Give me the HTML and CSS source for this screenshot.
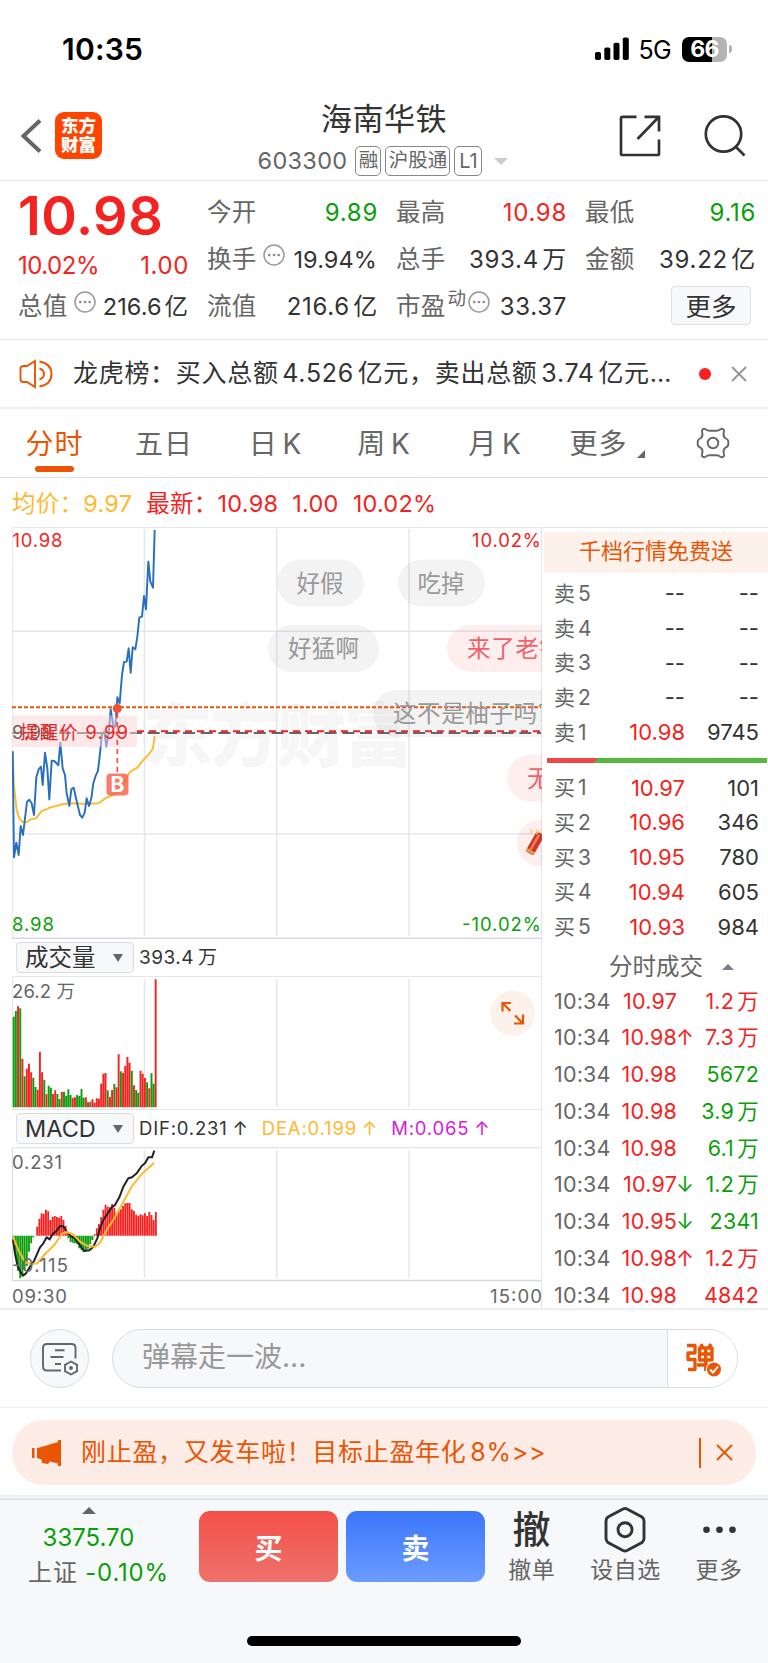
FILE: index.html
```
<!DOCTYPE html>
<html lang="zh-CN">
<head>
<meta charset="utf-8">
<title>海南华铁 603300</title>
<link rel="stylesheet" href="styles.css">
</head>
<body>
<svg class="defs" width="0" height="0">
  <symbol id="info" viewBox="0 0 24 24"><circle cx="12" cy="12" r="10" fill="none" stroke="#999" stroke-width="1.500"/><g fill="#888"><circle cx="7.300" cy="12" r="1.300"/><circle cx="12" cy="12" r="1.300"/><circle cx="16.700" cy="12" r="1.300"/></g></symbol>
</svg>

<div class="status">
  <span class="clock">10:35</span>
  <span class="status-right">
    <svg width="34" height="24" viewBox="0 0 34 24"><rect x="0" y="15" width="6" height="8" rx="1.800"/><rect x="9.300" y="10.500" width="6" height="12.500" rx="1.800"/><rect x="18.500" y="5.700" width="6" height="17.300" rx="1.800"/><rect x="27.800" y="0.500" width="6" height="22.500" rx="1.800"/></svg>
    <span class="net">5G</span>
    <span class="battery"><span>66</span></span><i class="nub"></i>
  </span>
</div>

<header class="head">
  <div class="head-left">
    <svg width="22" height="36" viewBox="0 0 22 36" fill="none" stroke="#666" stroke-width="4"><path d="M20 2.500 3.500 18 20 33.500"/></svg>
    <div class="logo"><span>东方</span><span>财富</span></div>
  </div>
  <div class="title">
    <h1>海南华铁</h1>
    <div class="sub"><span class="code">603300</span><b>融</b><b class="mid">沪股通</b><b class="l1">L1</b><i class="tri-down"></i></div>
  </div>
  <div class="head-right">
    <svg width="42" height="42" viewBox="0 0 42 42" fill="none" stroke="#333" stroke-width="2.700"><path d="M17.500 1.800H3.500a1.500 1.500 0 0 0-1.500 1.500V38.500a1.500 1.500 0 0 0 1.500 1.500H38.500a1.500 1.500 0 0 0 1.500-1.500V24.500M25.500 1.800H40V16.500M40 1.800 18.500 24"/></svg>
    <svg width="42" height="42" viewBox="0 0 42 42" fill="none" stroke="#333" stroke-width="2.700"><circle cx="19.500" cy="19" r="17.700"/><path d="M31.500 31.500 40.500 40.500"/></svg>
  </div>
</header>

<section class="quote">
  <div class="col first">
    <div class="price red">10.98</div>
    <div class="row chg red"><span>10.02%</span><span class="abs">1.00</span></div>
    <div class="row"><span class="k">总值<svg class="ic"><use href="#info"/></svg></span><span class="v tight">216.6 亿</span></div>
  </div>
  <div class="col">
    <div class="row"><span class="k">今开</span><span class="v green">9.89</span></div>
    <div class="row"><span class="k">换手<svg class="ic"><use href="#info"/></svg></span><span class="v tight">19.94%</span></div>
    <div class="row"><span class="k">流值</span><span class="v">216.6 亿</span></div>
  </div>
  <div class="col">
    <div class="row"><span class="k">最高</span><span class="v red">10.98</span></div>
    <div class="row"><span class="k">总手</span><span class="v">393.4 万</span></div>
    <div class="row"><span class="k">市盈<sup>动</sup><svg class="ic near"><use href="#info"/></svg></span><span class="v">33.37</span></div>
  </div>
  <div class="col">
    <div class="row"><span class="k">最低</span><span class="v green">9.16</span></div>
    <div class="row"><span class="k">金额</span><span class="v">39.22 亿</span></div>
    <div class="row end"><button class="more">更多</button></div>
  </div>
</section>

<section class="news">
  <svg width="34" height="30" viewBox="0 0 34 30" fill="none" stroke="#ea5504" stroke-width="1.900"><path d="M16 2 8 7H4.500Q1.500 7 1.500 10V20Q1.500 23 4.500 23H8L16 28Z"/><path d="M20.500 9.500Q25 11 25 15T20.500 20.500M20.500 2.500C29 4 32.500 9 32.500 15S29 26 20.500 27.500"/></svg>
  <span class="news-text">龙虎榜：买入总额 4.526 亿元，卖出总额 3.74 亿元…</span>
  <i class="dot"></i>
  <svg width="16" height="16" viewBox="0 0 16 16" stroke="#999" stroke-width="2"><path d="M1 1 15 15M15 1 1 15"/></svg>
</section>

<nav class="tabs">
  <span class="on">分时</span><span>五日</span><span>日 K</span><span>周 K</span><span>月 K</span><span class="tmore">更多<i></i></span>
  <svg width="34" height="34" viewBox="-17 -17 34 34" fill="none" stroke="#666" stroke-width="1.900" stroke-linejoin="round"><path d="M-10.500 -13.500Q-9 -14.800 -7.500 -13.800Q-5.500 -12.300 -3.500 -12.300H3.500Q5.500 -12.300 7.500 -13.800Q9 -14.800 10.500 -13.500Q11.500 -12.500 10.800 -10.500Q9.800 -7 12 -5Q15.300 -3.500 15.300 -1.500V1.500Q15.300 3.500 12 5Q9.800 7 10.800 10.500Q11.500 12.500 10.500 13.500Q9 14.800 7.500 13.800Q5.500 12.300 3.500 12.300H-3.500Q-5.500 12.300 -7.500 13.800Q-9 14.800 -10.500 13.500Q-11.500 12.500 -10.800 10.500Q-9.800 7 -12 5Q-15.300 3.500 -15.300 1.500V-1.500Q-15.300 -3.500 -12 -5Q-9.800 -7 -10.800 -10.500Q-11.500 -12.500 -10.500 -13.500Z"/><circle r="5.300"/></svg>
</nav>

<div class="legend"><span class="yellow">均价：9.97</span><span class="red latest">最新：10.98</span><span class="red c2">1.00</span><span class="red c3">10.02%</span></div>

<main class="main">
  <div class="charts">
    <svg class="chart" width="530" height="412" viewBox="12 527 530 412">
      <g fill="#f6f6f6" font-weight="900" font-size="69"><text x="143" y="761" textLength="270">东方财富</text></g>
      <g stroke="#e3e7ed" fill="none"><path stroke-width="1.500" d="M144.500 529V936M276.800 529V936M409 529V936M12 631.300H541M12 834H541"/><path stroke="#e6e8ec" stroke-width="1.200" d="M12.500 939V527.500H541"/><path stroke="#d5d9df" stroke-width="1.500" d="M12 938.300H541"/></g>
      <g fill="none" stroke-width="5.800" stroke-linejoin="round" transform="translate(0 520) scale(.33333)">
        <path stroke="#ffb92e" d="M38 694 42 800 50 870 58 895 68 906 80 906 92 898 108 895 124 874 150 863 190 852 220 850 260 852 296 850 314 836 345 822 365 800 390 756 412 743 430 720 445 705 459 685 464 648"/>
        <path stroke="#296fc0" d="M38 694 42 1012 49 968 56 1005 62 918 69 945 81 845 88 839 95 850 102 885 109 772 116 748 123 740 128 795 135 698 142 745 148 838 155 722 163 723 175 736 181 668 188 745 195 765 200 820 208 858 214 808 221 803 228 835 240 885 247 893 254 878 260 835 267 858 274 835 280 790 286 770 294 752 300 700 306 640 313 635 319 680 326 640 332 568 340 620 346 620 352 532 359 550 366 465 372 426 380 425 386 385 392 458 398 382 406 388 412 350 418 292 426 290 432 228 438 268 445 125 451 185 459 203 464 30"/>
      </g>
      <path d="M12 707.300H541" stroke="#ea5504" stroke-width="2" stroke-dasharray="4 2"/>
      <path d="M12 733H541" stroke="#666" stroke-width="2" stroke-dasharray="12 5.700" stroke-dashoffset="6"/>
      <path d="M137 731.300H541" stroke="#f52222" stroke-width="2" stroke-dasharray="7 5"/>
      <g class="cap">
        <rect x="12" y="715.500" width="125" height="31.500" rx="3" fill="#fbd3d6" fill-opacity=".5"/>
        <text x="12" y="739" fill="#666" textLength="41">9.98</text>
        <text x="20" y="739" fill="#f52222" textLength="108">提醒价 9.99</text>
        <text x="12.500" y="547" fill="#f52222" textLength="50">10.98</text>
        <text x="472" y="547" fill="#f52222" textLength="69">10.02%</text>
        <text x="12" y="931" fill="#0a9f0a" textLength="42">8.98</text>
        <text x="462" y="931" fill="#0a9f0a" textLength="79">-10.02%</text>
      </g>
      <path d="M117.300 713V773" stroke="#f52222" stroke-opacity=".8" stroke-width="1.700" stroke-dasharray="5 4"/>
      <circle cx="117.300" cy="708.500" r="4.500" fill="#ee5233"/>
      <rect x="106.500" y="773.500" width="22" height="22" rx="4" fill="#f9644e" fill-opacity=".85"/>
      <text x="117.500" y="792" text-anchor="middle" font-size="21" font-weight="700" fill="#fff">B</text>
      <g fill="#888" fill-opacity=".1">
        <rect x="277" y="559.500" width="87" height="47" rx="23.500"/><rect x="398" y="559.500" width="87" height="47" rx="23.500"/><rect x="268" y="625" width="111" height="47" rx="23.500"/><rect x="373" y="690" width="220" height="47" rx="23.500"/>
        <g fill="#f52222" fill-opacity=".08"><rect x="447" y="625" width="130" height="47" rx="23.500"/><rect x="507" y="754.500" width="90" height="47" rx="23.500"/><rect x="517" y="819.500" width="80" height="47" rx="23.500"/></g>
      </g>
      <g font-size="23.500" fill="#999">
        <text x="296.500" y="592" textLength="47">好假</text><text x="417.500" y="592" textLength="47">吃掉</text><text x="288" y="657" textLength="71">好猛啊</text><text x="393" y="722" textLength="168">这不是柚子吗？</text>
        <g fill="#f0616a"><text x="467" y="657" textLength="96">来了老铁</text><text x="527" y="787">无敌</text></g>
      </g>
      <g transform="translate(541 838) rotate(30)"><rect x="-7" y="-4" width="9" height="23" rx="1.500" fill="#cf3525"/><rect x="-4.500" y="-2" width="2.500" height="18" fill="#f0785b"/><rect x="-7" y="15.500" width="9" height="3" fill="#d9a441"/></g>
      <path d="m530 829 3 3m-3 2 3-3m3-2 3 4m-3 1 4-4" stroke="#f5cf8a" stroke-width="1.200"/>
    </svg>

    <div class="ind"><span class="pick">成交量<i></i></span><span class="iv">393.4 万</span></div>
    <svg class="chart" width="530" height="134" viewBox="12 976 530 134">
      <path d="M144.500 979V1107M276.800 979V1107M409 979V1107" stroke="#e3e7ed" stroke-width="1.500"/><path d="M541 976.500H12.500V1107M12 1109.500H541" fill="none" stroke="#e3e6ea"/>
      <g fill="none" stroke-width="5.800" transform="translate(0 930) scale(.33333)">
        <path stroke="#0a9f0a" d="M41 532V260M47.600 532V243M60.700 532V235M73.800 532V439M100 532V443M106.600 532V471M132.900 532V449M146 532V467M152.600 532V473M172.200 532V492M178.800 532V507M192 532V485M198.500 532V497M205 532V478M211.600 532V495M231.300 532V495M237.900 532V498M244.500 532V477M251 532V503M270.700 532V515M323.200 532V481M342.900 532V462M362.600 532V424M395.400 532V422M408.500 532V480M415 532V488M441.300 532V457M454.500 532V430M461 532V461"/>
        <path stroke="#f52222" d="M54.100 532V229M67.200 532V386M80.400 532V416M86.900 532V401M93.500 532V427M113.200 532V479M119.700 532V366M126.300 532V427M139.400 532V492M159.100 532V492M165.700 532V481M185.400 532V486M218.200 532V504M224.800 532V502M257.600 532V502M264.100 532V517M277.300 532V508M283.800 532V518M290.400 532V505M296.900 532V507M303.500 532V461M310.100 532V431M316.600 532V429M329.800 532V501M336.300 532V480M349.400 532V472M356 532V373M369.100 532V429M375.700 532V408M382.300 532V381M388.800 532V398M401.900 532V466M421.600 532V422M428.200 532V431M434.800 532V444M447.900 532V475M467 532V148"/>
      </g>
      <text class="cap" x="12" y="998" fill="#666" textLength="63">26.2 万</text>
      <circle cx="512.500" cy="1013.200" r="22.500" fill="#fdf1eb"/>
      <path d="M511 1003H502.500V1011.500M502.500 1003 510.500 1011M514 1023.500H523V1014.500M523 1023.500 515 1015.500" fill="none" stroke="#ea5504" stroke-width="2.200"/>
    </svg>

    <div class="ind"><span class="pick">MACD<i></i></span><span class="iv mac">DIF:0.231 ↑</span><span class="iv mac dea">DEA:0.199 ↑</span><span class="iv mac m">M:0.065 ↑</span></div>
    <svg class="chart" width="530" height="161" viewBox="12 1147 530 161">
      <path d="M144.500 1150V1278M276.800 1150V1278M409 1150V1278" stroke="#e3e7ed" stroke-width="1.500"/><path d="M541 1147.800H12.500V1280" fill="none" stroke="#d9dce1"/><path d="M12 1280.500H541" stroke="#d5d9df" stroke-width="1.500"/>
      <g fill="none" stroke-width="5.600" transform="translate(0 930) scale(.33333)">
        <path stroke="#0a9f0a" d="M41 917V940M47.600 917V985M54.100 917V1022M60.700 917V1045M67.200 917V1040M73.800 917V1020M80.400 917V1008M86.900 917V965M93.500 917V940M100 917V922M205 917V925M211.600 917V936M218.200 917V938M224.800 917V940M231.300 917V942M237.900 917V955M244.500 917V960M251 917V966M257.600 917V960M264.100 917V956M270.700 917V943M277.300 917V930"/>
        <path stroke="#f52222" d="M111.600 917V890M118.200 917V866M124.800 917V850M131.300 917V852M137.900 917V839M144.500 917V844M151 917V870M157.600 917V861M164.100 917V858M170.700 917V861M177.300 917V863M183.800 917V858M190.400 917V870M197 917V888M203.500 917V910M283.800 917V913M290.400 917V895M296.900 917V882M303.500 917V861M310.100 917V839M316.600 917V824M323.200 917V830M329.800 917V832M336.300 917V822M342.900 917V833M349.400 917V850M356 917V843M362.600 917V838M369.100 917V828M375.700 917V820M382.300 917V819M388.800 917V819M395.400 917V838M401.900 917V843M408.500 917V854M415 917V857M421.600 917V853M428.200 917V856M434.800 917V850M441.300 917V858M447.900 917V846M454.500 917V855M461 917V870M467.600 917V846"/>
        <g stroke-width="6" stroke-linejoin="round"><path stroke="#222" d="M39 928 44 965 52 1005 62 1028 70 1036 78 1030 90 1010 102 993 112 970 120 952 130 940 140 922 149 928 158 912 170 902 180 888 190 889 200 905 212 918 225 925 238 943 252 963 268 961 280 950 292 925 300 895 310 870 322 852 335 832 345 825 358 802 370 770 385 745 396 742 410 730 425 708 435 700 445 682 456 682 463 662"/>
        <path stroke="#ffb92e" d="M39 920 55 960 75 997 95 1003 112 1000 135 972 165 943 185 912 200 906 218 912 240 935 262 948 285 950 300 938 325 892 345 862 370 815 395 770 425 732 463 698"/></g>
      </g>
      <g class="cap" fill="#666"><text x="12" y="1169" textLength="50">0.231</text><text x="12" y="1271.500" textLength="56">-0.115</text><text x="12" y="1302.500" textLength="55">09:30</text><text x="490" y="1302.500" textLength="52">15:00</text></g>
    </svg>
  </div>

  <aside class="book">
    <div class="free">千档行情免费送</div>
    <div class="levels">
      <div><span>卖 5</span><b>--</b><em>--</em></div>
      <div><span>卖 4</span><b>--</b><em>--</em></div>
      <div><span>卖 3</span><b>--</b><em>--</em></div>
      <div><span>卖 2</span><b>--</b><em>--</em></div>
      <div><span>卖 1</span><b class="red">10.98</b><em>9745</em></div>
    </div>
    <svg class="ratio" width="220" height="5"><path d="M0 0H220V5H0Z" fill="#56b83f"/><path d="M0 0H51L47 5H0Z" fill="#ee4747"/></svg>
    <div class="levels">
      <div><span>买 1</span><b class="red">10.97</b><em>101</em></div>
      <div><span>买 2</span><b class="red">10.96</b><em>346</em></div>
      <div><span>买 3</span><b class="red">10.95</b><em>780</em></div>
      <div><span>买 4</span><b class="red">10.94</b><em>605</em></div>
      <div><span>买 5</span><b class="red">10.93</b><em>984</em></div>
    </div>
    <div class="thead">分时成交<i></i></div>
    <div class="ticks">
      <div><span>10:34</span><b>10.97</b><u></u><em class="red">1.2 万</em></div>
      <div><span>10:34</span><b>10.98</b><u class="red">↑</u><em class="red">7.3 万</em></div>
      <div><span>10:34</span><b>10.98</b><u></u><em class="green">5672</em></div>
      <div><span>10:34</span><b>10.98</b><u></u><em class="green">3.9 万</em></div>
      <div><span>10:34</span><b>10.98</b><u></u><em class="green">6.1 万</em></div>
      <div><span>10:34</span><b>10.97</b><u class="green">↓</u><em class="green">1.2 万</em></div>
      <div><span>10:34</span><b>10.95</b><u class="green">↓</u><em class="green">2341</em></div>
      <div><span>10:34</span><b>10.98</b><u class="red">↑</u><em class="red">1.2 万</em></div>
      <div><span>10:34</span><b>10.98</b><u></u><em class="red">4842</em></div>
    </div>
  </aside>
</main>

<section class="danmu">
  <div class="round"><svg width="38" height="34" viewBox="0 0 38 34" fill="none" stroke="#666" stroke-width="1.900"><path d="M20 28.500H6Q2 28.500 2 24.500V6Q2 2 6 2H30.500Q34.500 2 34.500 6V16.500M14 8.300H23.500M9.500 15H22.500M14 22H20"/><path d="M30 19.500 36 22.800V29.200L30 32.500 24 29.200V22.800Z"/><circle cx="30" cy="26" r="1" fill="#666"/></svg></div>
  <div class="input"><span>弹幕走一波...</span><div class="send"><svg width="36" height="34" viewBox="0 0 36 34"><g fill="none" stroke="#ea5504" stroke-width="3.300" stroke-linejoin="round"><path d="M1 2.500H9V10H2V16.500H9V26.500H2"/><path d="M13.500 5H26V17H13.500ZM13.500 11H26M19.700 5V28M11 22H22M15 1 16.500 4M25 1 23 4"/></g><circle cx="28" cy="26.500" r="8.200" fill="#fff"/><circle cx="28" cy="26.500" r="7" fill="#ea5504"/><path d="m24 26.500 3 3 5-6" fill="none" stroke="#fff" stroke-width="1.900"/></svg></div></div>
</section>

<section class="promo">
  <div class="pill">
    <svg width="32" height="28" viewBox="0 0 32 28" fill="#ea5504"><path d="M1 9H3.500V19H1ZM6 9H7L27 3V1H30V27H27V24.500L19 22.500 17 25 11 24 10.500 20.500 6 19Z"/></svg>
    <span>刚止盈，又发车啦！目标止盈年化 8%&gt;&gt;</span>
    <i class="bar"></i>
    <svg width="17" height="17" viewBox="0 0 17 17" stroke="#ea5504" stroke-width="1.900"><path d="M1 1 16 16M16 1 1 16"/></svg>
  </div>
</section>

<footer class="foot">
  <div class="index"><i></i><span class="green">3375.70</span><span class="sh">上证 <em class="green">-0.10%</em></span></div>
  <button class="buy">买</button><button class="sell">卖</button>
  <div class="acts">
    <div><strong>撤</strong><span>撤单</span></div>
    <div><svg width="44" height="48" viewBox="0 0 44 48" fill="none" stroke="#333" stroke-width="2.900"><path d="M20 3Q22 2 24 3L39 11Q41 12.500 41 15V32.500Q41 35 39 36.500L24 44.500Q22 45.500 20 44.500L5 36.500Q3 35 3 32.500V15Q3 12.500 5 11Z"/><circle cx="22" cy="23.700" r="7"/></svg><span>设自选</span></div>
    <div><svg width="44" height="48" viewBox="0 0 44 48" fill="#333"><circle cx="9.500" cy="23.700" r="3.300"/><circle cx="22.500" cy="23.700" r="3.300"/><circle cx="35.500" cy="23.700" r="3.300"/></svg><span>更多</span></div>
  </div>
  <i class="home"></i>
</footer>
</body>
</html>
```
FILE: styles.css
```
* { box-sizing: border-box; margin: 0; padding: 0; }
body { width: 768px; height: 1663px; overflow: hidden; background: #fff; color: #333; font: 400 24px/1 Inter, "Noto Sans CJK SC", sans-serif; white-space: nowrap; }
svg { display: block; flex: none; }
i, em, b, u { font-style: normal; font-weight: 400; text-decoration: none; }
.defs { position: absolute; }
.red { color: #f52222; }
.green { color: #0a9f0a; }
.yellow { color: #ffb92e; }

.status { height: 96px; padding: 2px 37px 0 62px; display: flex; align-items: center; justify-content: space-between; color: #000; }
.clock { font-size: 30px; font-weight: 600; letter-spacing: .2px; }
.status-right { display: flex; align-items: center; }
.net { font-size: 25px; margin: 2px 11px 0 10px; letter-spacing: -.7px; }
.battery { width: 45px; height: 25px; border-radius: 7px; background: linear-gradient(90deg, #000 66%, #b3b3b3 66%); color: #fff; font-size: 23px; font-weight: 700; display: flex; align-items: center; justify-content: center; letter-spacing: -.8px; }
.nub { width: 3px; height: 8px; margin: 0 -1px 0 2px; border-radius: 0 3px 3px 0; background: #b3b3b3; }

.head { height: 85px; display: grid; grid-template-columns: 200px 1fr 200px; border-bottom: 1.500px solid #e6e8ea; }
.head-left { display: flex; align-items: center; padding-left: 20px; height: 79px; }
.logo { margin-left: 13px; width: 47px; height: 47px; border-radius: 9px; background: #ff4400; color: #fff; display: flex; flex-direction: column; align-items: center; justify-content: center; font-size: 17.500px; font-weight: 900; line-height: 19px; padding-bottom: 1px; }
.title { display: flex; flex-direction: column; align-items: center; }
h1 { font-size: 31px; font-weight: 400; line-height: 36px; margin-top: 5px; letter-spacing: .5px; }
.sub { display: flex; align-items: center; margin: 9px 0 0 -2px; color: #666; }
.code { font-size: 23.500px; letter-spacing: .3px; margin-right: 8px; }
.sub b { height: 30px; border: 1.500px solid #888; border-radius: 5px; font-size: 19.500px; width: 26px; display: flex; align-items: center; justify-content: center; margin-right: 4px; }
.sub .mid { width: 65px; }
.sub .l1 { width: 28px; font-size: 20px; }
.tri-down { border: 7px solid transparent; border-top-color: #ccc; border-bottom: 0; margin-left: 8px; }
.head-right { display: flex; gap: 43px; padding: 19px 0 0 51px; }

.quote { height: 159px; border-bottom: 1.500px solid #e6e8ea; display: grid; grid-template-columns: repeat(4, 169px); gap: 20px; padding: 8px 0 0 19px; }
.col { display: flex; flex-direction: column; }
.row { height: 47px; display: flex; align-items: center; justify-content: space-between; }
.k { display: flex; align-items: center; color: #666; font-size: 24.500px; letter-spacing: .3px; margin-left: -1px; }
.v { font-size: 24px; letter-spacing: .7px; margin-right: -1px; word-spacing: -4px; }
.tight { font-size: 23.500px; letter-spacing: .1px; margin-right: 0; }
.price { height: 52px; font-size: 54px; font-weight: 600; line-height: 54px; letter-spacing: .5px; margin-left: -1px; }
.chg { height: 42px; font-size: 24px; align-items: flex-end; padding-bottom: 5px; letter-spacing: -.5px; margin-left: -1px; }
.abs { letter-spacing: .6px; margin-right: -1px; }
.ic { width: 24px; height: 24px; margin: -9px 0 0 5px; }
.ic.near { margin-left: 1px; }
sup { font-size: 18.500px; margin-top: -16px; margin-left: 2px; }
.row.end { justify-content: flex-end; }
.more { width: 80px; height: 39px; margin: -2px 4px 0 0; border: 1px solid #dde0e4; border-radius: 4px; background: #f7f8fa; color: #333; font: 400 25.500px/1 "Noto Sans CJK SC"; padding-bottom: 2px; }

.news { height: 69px; display: flex; align-items: center; padding-left: 19px; border-bottom: 2px solid #eceef0; }
.news-text { width: 600px; margin-left: 20px; font-size: 25px; letter-spacing: .7px; word-spacing: -4px; }
.dot { width: 12px; height: 12px; border-radius: 50%; background: #f52222; margin: 0 20px 0 26px; }

.tabs { height: 69px; border-bottom: 1.500px solid #dcdfe4; display: grid; grid-template-columns: 109px 110px 113px 104px 118px 106px 106px; align-items: center; justify-items: center; color: #666; font-size: 28px; letter-spacing: 1px; word-spacing: -4px; }
.tabs span { height: 68px; display: flex; align-items: center; position: relative; padding-top: 2px; }
.tabs .on { color: #ea5504; }
.tabs .on::after { content: ""; position: absolute; left: 10px; bottom: 5px; width: 39px; height: 6px; border-radius: 3px; background: #ea5504; }
.tmore i { border: 4px solid transparent; border-right-color: #666; border-bottom-color: #666; margin: 20px 0 0 9px; }

.legend { height: 49px; padding: 3px 0 0 12px; display: flex; align-items: center; font-size: 23.500px; letter-spacing: .25px; }
.latest { margin-left: 14px; } .c2 { margin-left: 14px; } .c3 { margin-left: 14px; }

.main { height: 783px; display: flex; border-bottom: 2px solid #eceef0; }
.charts { width: 542px; padding-left: 12px; border-right: 1px solid #e3e6ea; }
.cap { font-size: 18.500px; }
.ind { height: 37px; display: flex; align-items: center; }
.pick { width: 118px; height: 31px; margin-left: 4px; border: 1px solid #d9dce1; border-radius: 4px; background: #f7f8fa; display: flex; align-items: center; justify-content: space-between; padding: 0 10px 0 8px; font-size: 23.500px; }
.pick i { border: 5px solid transparent; border-top: 8px solid #666; border-bottom: 0; }
.iv { font-size: 19px; margin-left: 5px; letter-spacing: .5px; word-spacing: -2px; }
.mac { font-size: 18.500px; letter-spacing: .8px; word-spacing: -1px; }
.dea { color: #ffb92e; margin-left: 13px; } .m { color: #d91ae0; margin-left: 13px; }

.book { width: 226px; border-top: 1px solid #e3e6ea; font-size: 22px; word-spacing: -3px; }
.free { height: 41px; margin: 4px 0 3px 2px; background: #fdf1eb; color: #ea5504; display: flex; align-items: center; justify-content: center; font-size: 22px; padding-bottom: 3px; }
.levels > div { height: 34.700px; padding: 0 9px 0 12px; display: grid; grid-template-columns: 60px 71px 1fr; align-items: center; }
.levels span { color: #666; font-size: 21px; }
.levels b, .levels em { text-align: right; }
.ratio { margin: 9px 0 7px 5px; }
.thead { height: 39px; display: flex; align-items: center; padding: 7px 0 0 67px; font-size: 23.500px; color: #666; }
.thead i { border: 6px solid transparent; border-bottom-color: #7a7d85; border-top: 0; margin-left: 19px; }
.ticks > div { height: 36.750px; padding: 0 9px 0 12px; display: grid; grid-template-columns: 57px 66px 15px 1fr; align-items: center; font-size: 21.500px; letter-spacing: .2px; }
.ticks span { color: #666; }
.ticks b { color: #f52222; text-align: right; }
.ticks u { margin-left: -1px; }
.ticks em { text-align: right; }

.danmu { height: 98px; display: flex; align-items: center; padding-left: 30px; border-bottom: 1px solid #eceef0; }
.round { width: 59px; height: 59px; border: 1px solid #d9dce1; border-radius: 50%; background: #f7f8fa; display: flex; align-items: center; justify-content: center; }
.input { margin-left: 23px; width: 626px; height: 59px; border: 1px solid #d9dce1; border-radius: 30px; background: #f7f8fa; overflow: hidden; display: flex; align-items: center; justify-content: space-between; padding-left: 29px; color: #999; font-size: 28px; }
.input > span { padding-bottom: 3px; }
.send { width: 70px; height: 59px; background: #fff; border-left: 1px solid #d9dce1; padding: 14px 0 0 18px; }

.promo { height: 89px; padding: 12px 12px 0; border-bottom: 2px solid #eceef0; }
.pill { height: 65px; border-radius: 32px; background: #fcece5; color: #ea5504; display: flex; align-items: center; padding-left: 19px; font-size: 25px; }
.pill span { margin-left: 18px; width: 618px; letter-spacing: .7px; word-spacing: -4px; }
.bar { width: 1.500px; height: 30px; background: #ea5504; margin-right: 15px; }

.foot { height: 165px; border-top: 2px solid #dfe2e6; margin-top: 1px; background: #f7f8fa; display: flex; align-items: flex-start; position: relative; }
.index { width: 199px; height: 90px; padding-right: 22px; display: flex; flex-direction: column; align-items: center; color: #666; font-size: 24px; }
.index i { border: 7px solid transparent; border-bottom-color: #666; border-top: 0; margin: 7px 0 12px; }
.index .sh { margin: 11px 0 0 20px; letter-spacing: .8px; }
.foot button { width: 139px; height: 71px; margin-top: 11px; border: 0; border-radius: 11px; color: #fff; font: 700 28px/1 "Noto Sans CJK SC"; background: linear-gradient(#f4504a, #ee716b); }
.foot .sell { margin-left: 8px; background: linear-gradient(#3b77fb, #6b9bff); }
.acts { display: flex; color: #666; font-size: 23px; letter-spacing: .5px; }
.acts div { width: 94px; display: flex; flex-direction: column; align-items: center; padding-top: 6px; margin-left: -.3px; }
.acts strong { height: 48px; line-height: 46px; font-size: 38px; font-weight: 500; color: #333; }
.acts svg + span, .acts strong + span { margin-top: 5px; }
.home { position: absolute; left: 247px; top: 136px; width: 274px; height: 10px; border-radius: 5px; background: #000; }
```
